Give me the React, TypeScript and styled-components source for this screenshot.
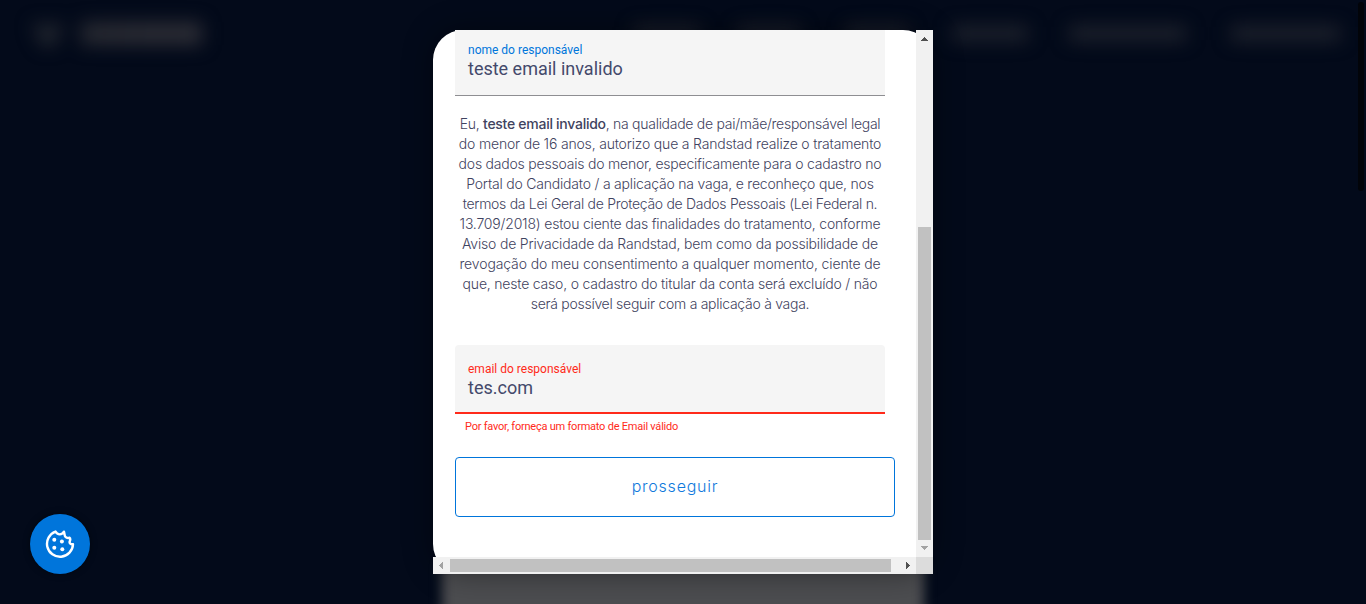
import React from "react";
import styled, { createGlobalStyle } from "styled-components";

const GlobalStyle = createGlobalStyle`
  *, *::before, *::after { box-sizing: border-box; }
  html, body { margin: 0; padding: 0; }
  body {
    width: 100%;
    height: 604px;
    overflow: hidden;
    background: #030a1a;
    font-family: Roboto, "Liberation Sans", sans-serif;
  }
`;

const Screen = styled.div`
  position: relative;
  display: flex;
  justify-content: center;
  width: 1366px;
  height: 604px;
  padding-top: 30px;
  overflow: hidden;
  background: #030a1a;
`;

/* The dimmed page that sits out of focus behind the dialog */
const Backdrop = styled.div`
  position: absolute;
  inset: 0;
  display: flex;
  flex-direction: column;
  justify-content: space-between;
  overflow: hidden;
`;

const Header = styled.header`
  display: flex;
  align-items: center;
  height: 67px;
  padding: 0 26px 0 32px;
  filter: blur(9px);
`;

const Emblem = styled.svg`
  width: 32px;
  height: 24px;
  margin-right: 17px;
`;

const Wordmark = styled.div`
  width: 121px;
  height: 23px;
  background: linear-gradient(100deg, #262830, #2b2c34 60%, #2c2d35);
`;

const Nav = styled.nav`
  display: flex;
  margin-left: auto;
  align-items: center;
`;

const NavItem = styled.div<{ $width: number; $gap: number }>`
  width: ${(p) => p.$width}px;
  height: 15px;
  margin-left: ${(p) => p.$gap}px;
  background: #1e222c;
`;

const PageCard = styled.div`
  align-self: center;
  width: 482px;
  height: 80px;
  margin-bottom: -40px;
  background: #4c4d50;
  filter: blur(6px);
`;

const PageThumb = styled.div`
  position: absolute;
  top: 2px;
  right: 2px;
  width: 6px;
  height: 189px;
  border-radius: 3px;
  background: #020409;
`;

const Dialog = styled.div`
  position: relative;
  display: grid;
  grid-template: 527px 17px / 483px 17px;
  width: 500px;
  height: 544px;
  border-radius: 30px;
  background: #fff;
  box-shadow: 0 0 30px rgba(0, 0, 0, 0.4);
`;

const Body = styled.div`
  display: flex;
  flex-direction: column;
  padding-left: 22px;
`;

const Field = styled.label<{ $error?: boolean }>`
  display: flex;
  flex-direction: column;
  width: 430px;
  height: ${(p) => (p.$error ? 69 : 66)}px;
  padding: ${(p) => (p.$error ? 16 : 12)}px 13px 0;
  border-bottom: ${(p) => (p.$error ? "2px solid #ff2a1a" : "1px solid #8e8e92")};
  border-radius: ${(p) => (p.$error ? "4px 4px 0 0" : "0")};
  background: #f5f5f5;
`;

const FieldLabel = styled.span<{ $error?: boolean }>`
  height: 16px;
  color: ${(p) => (p.$error ? "#ff2a1a" : "#0075db")};
  font-size: 12px;
  line-height: 16px;
`;

const FieldValue = styled.span`
  height: 22px;
  color: #44496b;
  font-size: 18px;
  line-height: 22px;
`;

const ErrorText = styled.div`
  height: 14px;
  margin-top: 6px;
  padding-left: 10px;
  color: #ff2a1a;
  font-size: 11px;
  line-height: 14px;
  letter-spacing: -0.225px;
`;

const Consent = styled.p`
  width: 430px;
  margin: 18px 0 31px;
  color: #3f4360;
  font: 300 14px/20px Inter, "Liberation Sans", sans-serif;
  text-align: center;
`;

const Line = styled.span<{ $tracking: number }>`
  display: block;
  white-space: nowrap;
  letter-spacing: ${(p) => p.$tracking}px;
`;

const Name = styled.strong`
  font-weight: 500;
`;

const Proceed = styled.button`
  width: 440px;
  height: 60px;
  margin-top: 23px;
  padding: 0 0 2px;
  border: 1px solid #0075db;
  border-radius: 4px;
  background: #fff;
  color: #0f79dc;
  font: 300 16px/20px Inter, "Liberation Sans", sans-serif;
  letter-spacing: 0.77px;
`;

const VScroll = styled.div`
  display: flex;
  flex-direction: column;
  align-items: center;
  justify-content: space-between;
  padding: 7px 0;
  background: #f1f1f1;
`;

const VThumb = styled.div`
  width: 13px;
  height: 313px;
  margin-top: auto;
  margin-bottom: 6px;
  background: #c1c1c1;
`;

const HScroll = styled.div`
  display: flex;
  align-items: center;
  padding: 0 6px;
  background: #f1f1f1;
`;

const HThumb = styled.div`
  width: 441px;
  height: 13px;
  margin-left: 7px;
  margin-right: auto;
  background: #c1c1c1;
`;

const Corner = styled.div`
  background: #dcdcdc;
`;

const Arrow = styled.svg<{ $dim?: boolean }>`
  display: block;
  flex: none;
  fill: ${(p) => (p.$dim ? "#a3a3a3" : "#505050")};
`;

const CookieButton = styled.button`
  position: absolute;
  left: 30px;
  bottom: 30px;
  display: flex;
  align-items: center;
  justify-content: center;
  width: 60px;
  height: 60px;
  padding: 0;
  border: 0;
  border-radius: 50%;
  background: #0075db;
  box-shadow: 0 0 6px rgba(0, 0, 0, 0.5);
`;

const navItems = [
  { width: 66, gap: 0 },
  { width: 62, gap: 38 },
  { width: 62, gap: 46 },
  { width: 76, gap: 44 },
  { width: 117, gap: 41 },
  { width: 109, gap: 45 },
];

const consentLines: { text: React.ReactNode; tracking: number }[] = [
  {
    text: (
      <>
        Eu, <Name>teste email invalido</Name>, na qualidade de pai/mãe/responsável legal
      </>
    ),
    tracking: -0.275,
  },
  { text: "do menor de 16 anos, autorizo que a Randstad realize o tratamento", tracking: -0.185 },
  { text: "dos dados pessoais do menor, especificamente para o cadastro no", tracking: -0.215 },
  { text: "Portal do Candidato / a aplicação na vaga, e reconheço que, nos", tracking: -0.205 },
  { text: "termos da Lei Geral de Proteção de Dados Pessoais (Lei Federal n.", tracking: -0.295 },
  { text: "13.709/2018) estou ciente das finalidades do tratamento, conforme", tracking: -0.19 },
  { text: "Aviso de Privacidade da Randstad, bem como da possibilidade de", tracking: -0.19 },
  { text: "revogação do meu consentimento a qualquer momento, ciente de", tracking: -0.12 },
  { text: "que, neste caso, o cadastro do titular da conta será excluído / não", tracking: -0.195 },
  { text: "será possível seguir com a aplicação à vaga.", tracking: -0.275 },
];

export default function App() {
  return (
    <Screen>
      <GlobalStyle />
      <Backdrop>
        <Header>
          <Emblem viewBox="0 0 32 24">
            <path d="M0 2h12l4 6 4-6h12L20 26h-8z" fill="#242830" />
          </Emblem>
          <Wordmark />
          <Nav>
            {navItems.map((item, i) => (
              <NavItem key={i} $width={item.width} $gap={item.gap} />
            ))}
          </Nav>
        </Header>
        <PageCard />
        <PageThumb />
      </Backdrop>

      <Dialog role="dialog">
        <Body>
          <Field>
            <FieldLabel>nome do responsável</FieldLabel>
            <FieldValue>teste email invalido</FieldValue>
          </Field>
          <Consent>
            {consentLines.map((line, i) => (
              <Line key={i} $tracking={line.tracking}>
                {line.text}
              </Line>
            ))}
          </Consent>
          <Field $error>
            <FieldLabel $error>email do responsável</FieldLabel>
            <FieldValue>tes.com</FieldValue>
          </Field>
          <ErrorText>Por favor, forneça um formato de Email válido</ErrorText>
          <Proceed>prosseguir</Proceed>
        </Body>
        <VScroll>
          <Arrow width="7" height="4" viewBox="0 0 7 4">
            <path d="M3 0h1v1h1v1h1v1h1v1H0V3h1V2h1V1h1z" />
          </Arrow>
          <VThumb />
          <Arrow $dim width="7" height="4" viewBox="0 0 7 4">
            <path d="M0 0h7v1H6v1H5v1H4v1H3V3H2V2H1V1H0z" />
          </Arrow>
        </VScroll>
        <HScroll>
          <Arrow $dim width="4" height="7" viewBox="0 0 4 7">
            <path d="M4 0v7H3V6H2V5H1V4H0V3h1V2h1V1h1V0z" />
          </Arrow>
          <HThumb />
          <Arrow width="4" height="7" viewBox="0 0 4 7">
            <path d="M0 0v7h1V6h1V5h1V4h1V3H3V2H2V1H1V0z" />
          </Arrow>
        </HScroll>
        <Corner />
      </Dialog>

      <CookieButton aria-label="cookies">
        <svg width="30" height="30" viewBox="0 0 30 30" fill="none">
          <path
            d="M10.500 2.600A13 13 0 1 0 28 15.200C25.800 15.700 24 14.300 24.800 12.300C25.400 10.800 25.300 9.300 24.500 8.700C22.500 9.500 19.600 8.300 19.600 5.800L19 2.600C17.300 6.200 12.300 6.300 10.500 2.600z"
            stroke="#fff"
            strokeWidth="2.4"
            strokeLinejoin="round"
          />
          <g fill="#fff">
            <circle cx="9.300" cy="10.700" r="2" />
            <circle cx="16.900" cy="12.600" r="2" />
            <circle cx="9.300" cy="18.800" r="2" />
            <circle cx="17.300" cy="20.300" r="2" />
          </g>
        </svg>
      </CookieButton>
    </Screen>
  );
}
